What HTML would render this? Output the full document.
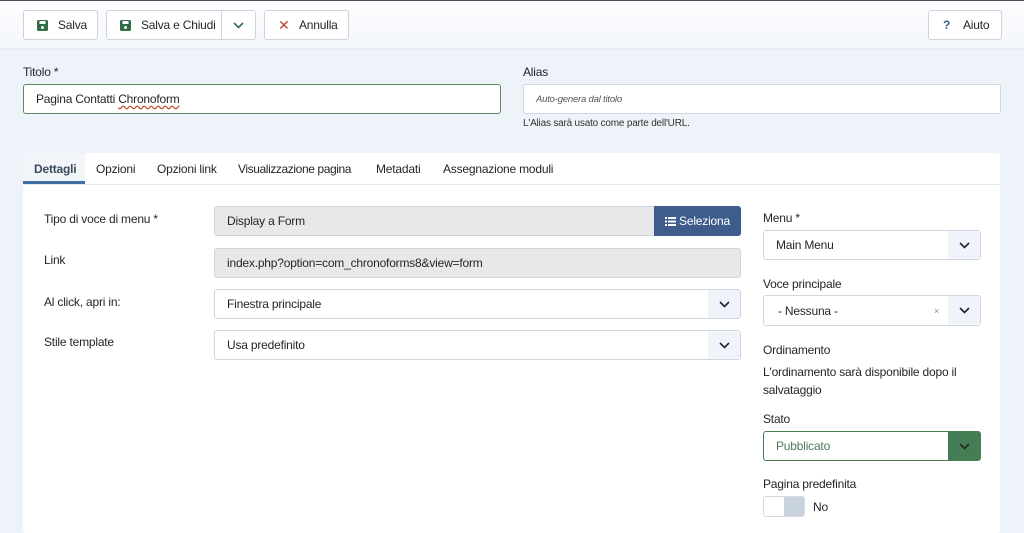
<!DOCTYPE html>
<html><head><meta charset="utf-8"><style>
*{box-sizing:border-box;margin:0;padding:0}
body{width:1024px;height:529px;overflow:hidden;background:#eef2f9;font-family:"Liberation Sans",sans-serif;font-size:12px;color:#22262a;position:relative;letter-spacing:-0.2px}
.a{position:absolute}
.top{left:0;top:0;width:1024px;height:48px;background:linear-gradient(#fdfdfe,#f3f6fb);border-top:1px solid #4a4f5a;box-shadow:0 1px 2px rgba(0,0,0,.05)}
.btn{position:absolute;height:30px;background:#fff;border:1px solid #ccd3dd;border-radius:3px;display:flex;align-items:center;font-size:12px;color:#22262a}
.inp{position:absolute;height:30px;background:#fff;border:1px solid #cfd6e0;border-radius:3px;display:flex;align-items:center;padding-left:12px;font-size:12px}
.dis{background:#e8e8e8}
.chev{position:absolute;right:0;top:0;width:32px;height:100%;background:#f0f3f9;display:flex;align-items:center;justify-content:center}
.lbl{position:absolute;font-size:12px}
</style></head><body>
<div class="a top"></div>
<div class="btn" style="left:23px;top:10px;width:75px"><svg class="a" style="left:13px;top:9px" width="11" height="11" viewBox="0 0 11 11"><rect x="0" y="0" width="11" height="11" rx="1.5" fill="#2f6e45"/><rect x="2.5" y="1" width="6" height="3" fill="#fff"/><circle cx="5.5" cy="7.5" r="1.5" fill="#fff"/></svg><span class="a" style="left:34px">Salva</span></div>
<div class="btn" style="left:106px;top:10px;width:150px"><svg class="a" style="left:13px;top:9px" width="11" height="11" viewBox="0 0 11 11"><rect width="11" height="11" rx="1.5" fill="#2f6e45"/><rect x="2.5" y="1" width="6" height="3" fill="#fff"/><circle cx="5.5" cy="7.5" r="1.5" fill="#fff"/></svg><span class="a" style="left:34px">Salva e Chiudi</span><div class="a" style="left:114px;top:0;width:1px;height:28px;background:#ccd3dd"></div><svg class="a" style="left:126px;top:11px" width="11" height="7" viewBox="0 0 11 7"><path d="M1 1l4.5 4.5L10 1" stroke="#2f6e45" stroke-width="1.6" fill="none"/></svg></div>
<div class="btn" style="left:264px;top:10px;width:85px"><span class="a" style="left:13px;color:#c0452c;font-size:14px">✕</span><span class="a" style="left:34px">Annulla</span></div>
<div class="btn" style="left:928px;top:10px;width:74px"><span class="a" style="left:14px;color:#3f5d8c;font-weight:bold">?</span><span class="a" style="left:34px">Aiuto</span></div>

<div class="lbl" style="left:23px;top:65px">Titolo *</div>
<div class="inp" style="left:23px;top:84px;width:478px;border-color:#5a8a62">Pagina Contatti&nbsp;<span style="text-decoration:underline wavy #c0452c;text-underline-offset:2px">Chronoform</span></div>
<div class="lbl" style="left:523px;top:65px">Alias</div>
<div class="inp" style="left:523px;top:84px;width:478px;font-style:italic;font-size:9.5px;color:#555">Auto-genera dal titolo</div>
<div class="lbl" style="left:523px;top:118px;font-size:10px;color:#333">L'Alias sarà usato come parte dell'URL.</div>

<div class="a" style="left:23px;top:153px;width:977px;height:380px;background:#fff;border-radius:3px"></div>
<div class="a" style="left:23px;top:184px;width:977px;height:1px;background:#e6e9ee"></div>
<div class="a" style="left:23px;top:153px;width:62px;height:28px;background:#f2f5f9"></div>
<div class="a" style="left:23px;top:181px;width:62px;height:3px;background:#3f6f9e"></div>
<div class="lbl" style="left:34px;top:162px;font-weight:bold;color:#3a4a5c">Dettagli</div>
<div class="lbl" style="left:96px;top:162px">Opzioni</div>
<div class="lbl" style="left:157px;top:162px">Opzioni link</div>
<div class="lbl" style="left:238px;top:162px;letter-spacing:-0.4px">Visualizzazione pagina</div>
<div class="lbl" style="left:376px;top:162px">Metadati</div>
<div class="lbl" style="left:443px;top:162px">Assegnazione moduli</div>

<div class="lbl" style="left:44px;top:212px">Tipo di voce di menu *</div>
<div class="inp dis" style="left:214px;top:206px;width:527px">Display a Form<div class="a" style="right:-1px;top:-1px;width:87px;height:30px;background:#3f5d8c;border-radius:0 3px 3px 0;color:#fff;display:flex;align-items:center;justify-content:center;gap:3px"><svg width="11" height="9" viewBox="0 0 11 9"><g fill="#fff"><rect y="0" width="2" height="2"/><rect y="3.5" width="2" height="2"/><rect y="7" width="2" height="2"/><rect x="3" y="0" width="8" height="2"/><rect x="3" y="3.5" width="8" height="2"/><rect x="3" y="7" width="8" height="2"/></g></svg>Seleziona</div></div>
<div class="lbl" style="left:44px;top:253px">Link</div>
<div class="inp dis" style="left:214px;top:248px;width:527px">index.php?option=com_chronoforms8&amp;view=form</div>
<div class="lbl" style="left:44px;top:295px">Al click, apri in:</div>
<div class="inp" style="left:214px;top:289px;width:527px">Finestra principale<div class="chev"><svg width="11" height="7" viewBox="0 0 11 7"><path d="M1 1l4.5 4.5L10 1" stroke="#22262a" stroke-width="1.6" fill="none"/></svg></div></div>
<div class="lbl" style="left:44px;top:335px">Stile template</div>
<div class="inp" style="left:214px;top:330px;width:527px">Usa predefinito<div class="chev"><svg width="11" height="7" viewBox="0 0 11 7"><path d="M1 1l4.5 4.5L10 1" stroke="#22262a" stroke-width="1.6" fill="none"/></svg></div></div>

<div class="lbl" style="left:763px;top:211px">Menu *</div>
<div class="inp" style="left:763px;top:230px;width:218px">Main Menu<div class="chev"><svg width="11" height="7" viewBox="0 0 11 7"><path d="M1 1l4.5 4.5L10 1" stroke="#22262a" stroke-width="1.6" fill="none"/></svg></div></div>
<div class="lbl" style="left:763px;top:277px">Voce principale</div>
<div class="inp" style="left:763px;top:295px;width:218px;height:31px;padding-left:14px">- Nessuna -<span class="a" style="left:170px;font-size:9px;color:#888">×</span><div class="chev"><svg width="11" height="7" viewBox="0 0 11 7"><path d="M1 1l4.5 4.5L10 1" stroke="#22262a" stroke-width="1.6" fill="none"/></svg></div></div>
<div class="lbl" style="left:763px;top:343px">Ordinamento</div>
<div class="lbl" style="left:763px;top:363px;line-height:18px">L'ordinamento sarà disponibile dopo il<br>salvataggio</div>
<div class="lbl" style="left:763px;top:412px">Stato</div>
<div class="inp" style="left:763px;top:431px;width:218px;border-color:#457d54;color:#4f7a5a">Pubblicato<div class="chev" style="background:#457d54;width:32px"><svg width="11" height="7" viewBox="0 0 11 7"><path d="M1 1l4.5 4.5L10 1" stroke="#1e2a22" stroke-width="1.6" fill="none"/></svg></div></div>
<div class="lbl" style="left:763px;top:477px">Pagina predefinita</div>
<div class="a" style="left:763px;top:496px;width:42px;height:21px;border:1px solid #d5dbe3;border-radius:3px;background:#fff;overflow:hidden"><div class="a" style="right:0;top:0;width:20px;height:19px;background:#c9d3de"></div></div>
<div class="lbl" style="left:813px;top:500px">No</div>
</body></html>
